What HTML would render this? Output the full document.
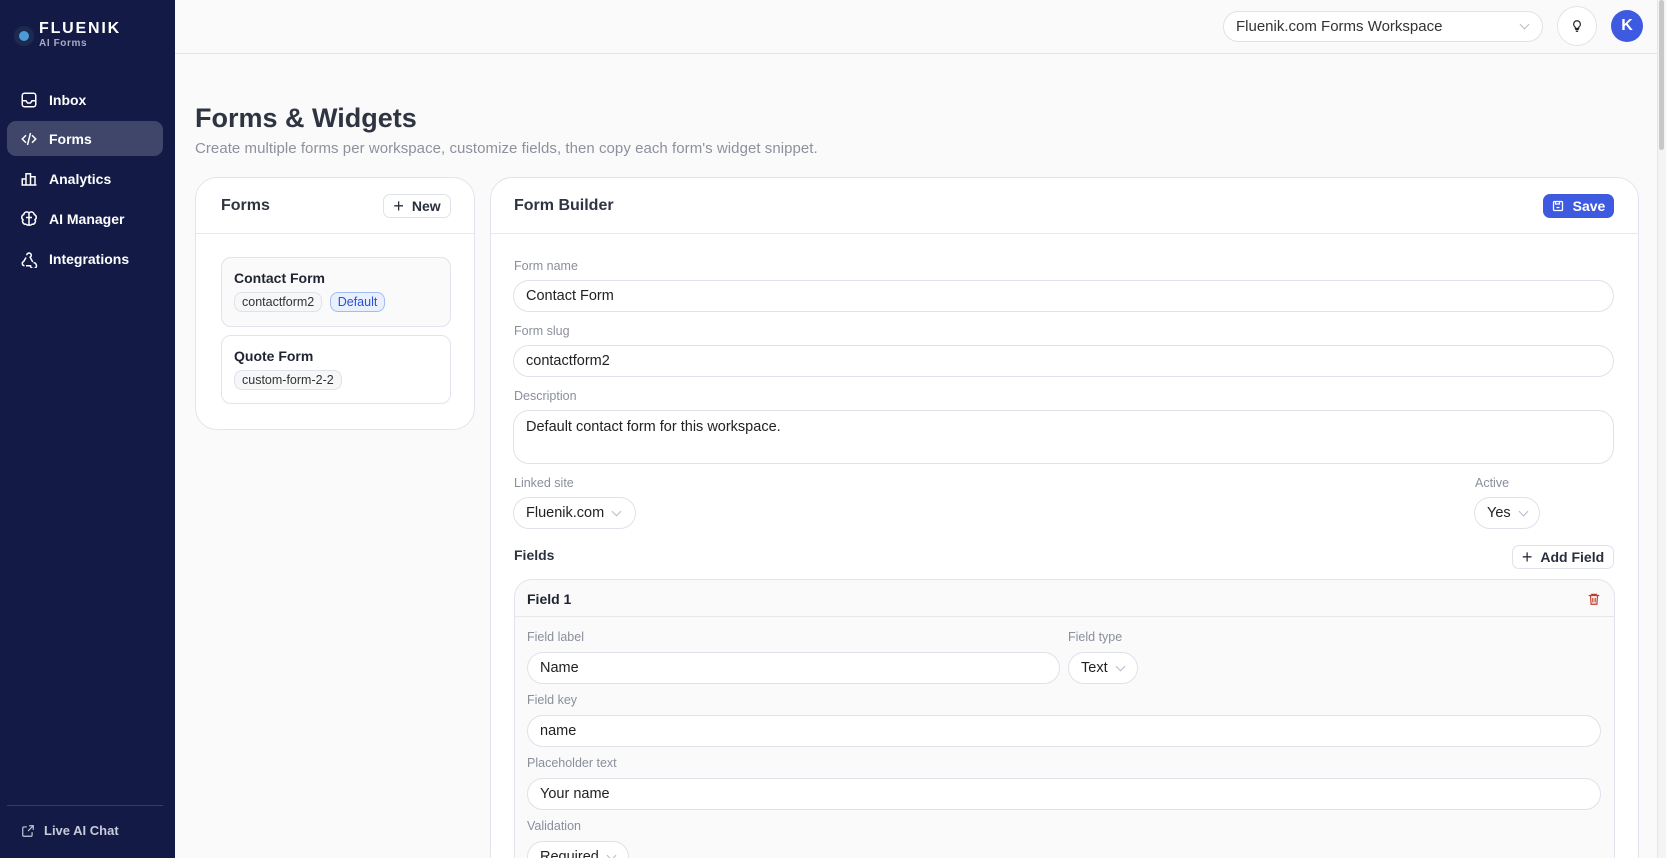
<!DOCTYPE html>
<html style="overflow:hidden;height:858px"><head><meta charset="utf-8"><style>
*{box-sizing:border-box;margin:0;padding:0}
body{width:1666px;height:858px;overflow:hidden;background:#fafafb;font-family:"Liberation Sans",sans-serif;color:#1f2433;position:relative}
.a{position:absolute}
.sb{left:0;top:0;width:175px;height:858px;background:#121a45}
.nav{left:7px;width:156px;height:35px;border-radius:9px;color:#fff;font-weight:bold;font-size:14px;display:flex;align-items:center;padding-left:13px}
.nav svg{margin-right:11px}
.lbl{font-size:12.5px;color:#8a8f9c}
.inp{border:1px solid #dfe2ea;border-radius:16px;background:#fff;font-size:14.5px;display:flex;align-items:center;padding-left:12px;color:#222}
.sel{border:1px solid #dfe2ea;border-radius:16px;background:#fff;font-size:14.5px;display:flex;align-items:center;padding-left:12px;color:#222}
.sel:after{content:"";width:6px;height:6px;border-right:1px solid #b8bcc6;border-bottom:1px solid #b8bcc6;transform:rotate(45deg);margin:-4px 0 0 9px}
.btn{border:1px solid #dfe2ea;border-radius:7px;background:#fff;font-weight:bold;font-size:14px;display:flex;align-items:center;justify-content:center;color:#2a2f3d}
.chip{display:inline-block;border:1px solid #dfe2ea;border-radius:8px;background:#f6f7f9;font-size:12.5px;padding:2px 7px;color:#333}
</style></head><body>
<div class="a sb">
  <div class="a" style="left:14px;top:26px;width:20px;height:20px;border-radius:50%;background:#1d2a4f"></div>
  <div class="a" style="left:19px;top:31px;width:10px;height:10px;border-radius:50%;background:#4d9bd6"></div>
  <div class="a" style="left:39px;top:20px;color:#fff;font-weight:bold;font-size:16px;letter-spacing:1.8px">FLUENIK</div>
  <div class="a" style="left:39px;top:38px;color:#a8adc2;font-weight:bold;font-size:10px;letter-spacing:.6px">AI Forms</div>
  <div class="a nav" style="top:82px"><svg width="18" height="18" viewBox="0 0 24 24" fill="none" stroke="#fff" stroke-width="2"><rect x="3" y="3" width="18" height="18" rx="3"/><path d="M3 13h5l2 3h4l2-3h5"/></svg>Inbox</div>
  <div class="a nav" style="top:121px;background:#3f466a"><svg width="18" height="18" viewBox="0 0 24 24" fill="none" stroke="#fff" stroke-width="2"><path d="M8 7l-5 5 5 5M16 7l5 5-5 5M14 4l-4 16"/></svg>Forms</div>
  <div class="a nav" style="top:161px"><svg width="18" height="18" viewBox="0 0 24 24" fill="none" stroke="#fff" stroke-width="2"><path d="M3 20V12h5v8M8 20V5h6v15M14 20V9h6v11M2 20h20"/></svg>Analytics</div>
  <div class="a nav" style="top:201px"><svg width="18" height="18" viewBox="0 0 24 24" fill="none" stroke="#fff" stroke-width="2"><path d="M12 4a4 4 0 0 0-7 2 4 4 0 0 0-1 7 4 4 0 0 0 4 6 4 4 0 0 0 4 1 4 4 0 0 0 4-1 4 4 0 0 0 4-6 4 4 0 0 0-1-7 4 4 0 0 0-7-2zM12 4v16M8 10h8"/></svg>AI Manager</div>
  <div class="a nav" style="top:241px"><svg width="18" height="18" viewBox="0 0 24 24" fill="none" stroke="#fff" stroke-width="2"><path d="M18 16.9A4 4 0 1 1 14 21H8M6 21a3 3 0 0 1-1-5.8l3-5.2M9 7a3 3 0 1 1 4.5 2.6L17 16"/></svg>Integrations</div>
  <div class="a" style="left:7px;top:805px;width:156px;height:1px;background:#353d63"></div>
  <div class="a" style="left:21px;top:823px;color:#c8cbd8;font-weight:bold;font-size:13px;display:flex;align-items:center"><svg width="14" height="14" viewBox="0 0 24 24" fill="none" stroke="#c8cbd8" stroke-width="2" style="margin-right:9px"><path d="M14 3h7v7M21 3l-9 9M19 14v5a2 2 0 0 1-2 2H5a2 2 0 0 1-2-2V7a2 2 0 0 1 2-2h5"/></svg>Live AI Chat</div>
</div>
<div class="a" style="left:175px;top:53px;width:1482px;height:1px;background:#e1e4ec"></div>
<div class="a" style="left:1657px;top:0;width:9px;height:858px;background:#f4f4f5;border-left:1px solid #e6e6e6"></div>
<div class="a" style="left:1659px;top:0;width:5px;height:150px;background:#c8c8c8;border-radius:3px"></div>
<div class="a sel" style="left:1223px;top:11px;width:320px;height:31px;font-size:15px;color:#333;justify-content:space-between;padding-right:14px">Fluenik.com Forms Workspace</div>
<div class="a" style="left:1557px;top:6px;width:40px;height:40px;border:1px solid #e1e4ec;border-radius:50%;background:#fff;display:flex;align-items:center;justify-content:center"><svg width="14" height="14" viewBox="0 0 24 24" fill="none" stroke="#222" stroke-width="2"><path d="M9 18h6M10 21h4M12 3a6 6 0 0 0-3 11v2h6v-2a6 6 0 0 0-3-11z"/></svg></div>
<div class="a" style="left:1611px;top:10px;width:32px;height:32px;border-radius:50%;background:#3d5ae0;color:#fff;font-weight:bold;font-size:16px;display:flex;align-items:center;justify-content:center">K</div>

<div class="a" style="left:195px;top:103px;font-size:27px;font-weight:bold;color:#2f3441">Forms &amp; Widgets</div>
<div class="a" style="left:195px;top:140px;font-size:15px;letter-spacing:.05px;color:#8d919c">Create multiple forms per workspace, customize fields, then copy each form's widget snippet.</div>

<div class="a" style="left:195px;top:177px;width:280px;height:253px;background:#fff;border:1px solid #e1e4ec;border-radius:22px">
  <div class="a" style="left:25px;top:19px;font-size:16px;font-weight:bold;color:#2f3441">Forms</div>
  <div class="a btn" style="left:187px;top:16px;width:68px;height:24px"><span style="font-weight:normal;font-size:18px;margin-right:8px">+</span>New</div>
  <div class="a" style="left:0;top:55px;width:278px;height:1px;background:#e6e8ee"></div>
  <div class="a" style="left:25px;top:79px;width:230px;height:70px;border:1px solid #e1e4ec;border-radius:10px;background:#fafafb;padding:12px 12px">
    <div style="font-weight:bold;font-size:14px;margin-bottom:6px">Contact Form</div>
    <span class="chip">contactform2</span> <span class="chip" style="background:#e8f0fe;border-color:#9fbcf5;color:#2f4fd0;margin-left:3px">Default</span>
  </div>
  <div class="a" style="left:25px;top:157px;width:230px;height:69px;border:1px solid #e1e4ec;border-radius:10px;background:#fff;padding:12px 12px">
    <div style="font-weight:bold;font-size:14px;margin-bottom:6px">Quote Form</div>
    <span class="chip">custom-form-2-2</span>
  </div>
</div>

<div class="a" style="left:490px;top:177px;width:1149px;height:700px;background:#fff;border:1px solid #e1e4ec;border-radius:22px">
  <div class="a" style="left:23px;top:19px;font-size:16px;font-weight:bold;color:#2f3441">Form Builder</div>
  <div class="a" style="left:1052px;top:16px;width:71px;height:24px;background:#3d5ae0;border-radius:7px;color:#fff;font-weight:bold;font-size:14px;display:flex;align-items:center;justify-content:center"><svg width="12" height="12" viewBox="0 0 24 24" fill="none" stroke="#fff" stroke-width="2.5" style="margin-right:9px"><rect x="3" y="3" width="18" height="18" rx="2"/><path d="M7 3v5h8V3M9 15h6"/></svg>Save</div>
  <div class="a" style="left:0;top:55px;width:1147px;height:1px;background:#e6e8ee"></div>
</div>
<div class="a lbl" style="left:514px;top:259px">Form name</div>
<div class="a inp" style="left:513px;top:280px;width:1101px;height:32px">Contact Form</div>
<div class="a lbl" style="left:514px;top:324px">Form slug</div>
<div class="a inp" style="left:513px;top:345px;width:1101px;height:32px">contactform2</div>
<div class="a lbl" style="left:514px;top:389px">Description</div>
<div class="a inp" style="left:513px;top:410px;width:1101px;height:54px;align-items:flex-start;padding-top:8px">Default contact form for this workspace.</div>
<div class="a lbl" style="left:514px;top:476px">Linked site</div>
<div class="a sel" style="left:513px;top:497px;width:123px;height:32px">Fluenik.com</div>
<div class="a lbl" style="left:1475px;top:476px">Active</div>
<div class="a sel" style="left:1474px;top:497px;width:66px;height:32px">Yes</div>
<div class="a" style="left:514px;top:547px;font-weight:bold;font-size:14px;color:#2f3441">Fields</div>
<div class="a btn" style="left:1512px;top:545px;width:102px;height:24px"><span style="font-weight:normal;font-size:18px;margin-right:8px">+</span>Add Field</div>
<div class="a" style="left:514px;top:579px;width:1101px;height:300px;border:1px solid #e1e4ec;border-radius:18px;background:#fafafb">
  <div class="a" style="left:12px;top:11px;font-weight:bold;font-size:14px">Field 1</div>
  <svg class="a" style="left:1072px;top:12px" width="14" height="14" viewBox="0 0 24 24" fill="none" stroke="#c0392b" stroke-width="2"><path d="M3 6h18M8 6V4h8v2M6 6l1 15h10l1-15M10 10v8M14 10v8"/></svg>
  <div class="a" style="left:0;top:36px;width:1099px;height:1px;background:#e6e8ee"></div>
</div>
<div class="a lbl" style="left:527px;top:630px">Field label</div>
<div class="a inp" style="left:527px;top:652px;width:533px;height:32px">Name</div>
<div class="a lbl" style="left:1068px;top:630px">Field type</div>
<div class="a sel" style="left:1068px;top:652px;width:70px;height:32px">Text</div>
<div class="a lbl" style="left:527px;top:693px">Field key</div>
<div class="a inp" style="left:527px;top:715px;width:1074px;height:32px">name</div>
<div class="a lbl" style="left:527px;top:756px">Placeholder text</div>
<div class="a inp" style="left:527px;top:778px;width:1074px;height:32px">Your name</div>
<div class="a lbl" style="left:527px;top:819px">Validation</div>
<div class="a sel" style="left:527px;top:841px;width:102px;height:32px">Required</div>
</body></html>
